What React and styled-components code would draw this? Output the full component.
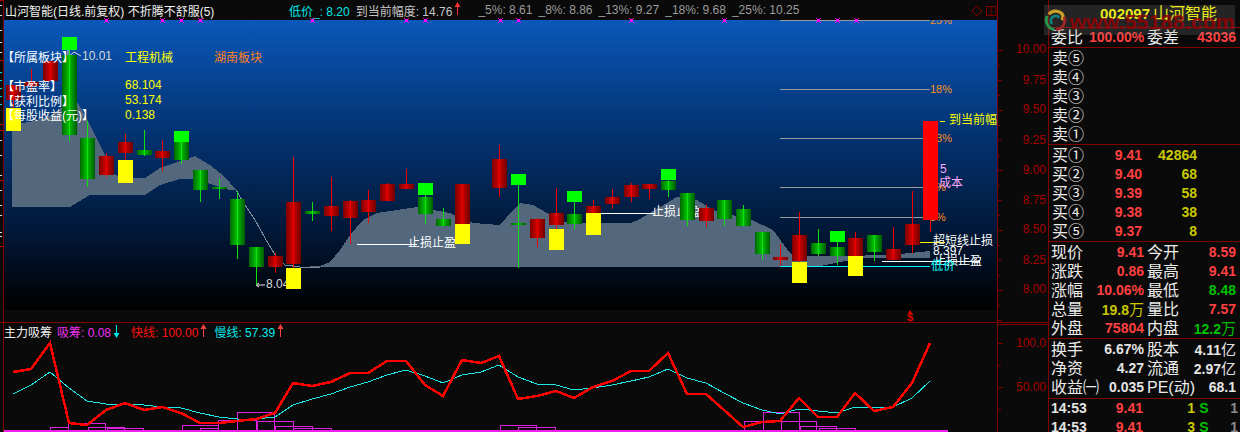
import React from "react";
import styled, { createGlobalStyle } from "styled-components";

const LINE = "#800000";
const FONT = `"Liberation Sans", "Noto Sans CJK SC", sans-serif`;

const GlobalStyle = createGlobalStyle`
  html, body {
    margin: 0;
    width: 1240px;
    height: 432px;
    overflow: hidden;
    background: #0a0a0a;
  }
`;

const Frame = styled.div`
  position: relative;
  display: flex;
  width: 1240px;
  height: 432px;
  overflow: hidden;
  background: #0a0a0a;
  font-family: ${FONT};
  font-size: 12px;
  color: #e8e8e8;
`;

const Charts = styled.div`
  display: flex;
  flex-direction: column;
  width: 1048px;
  flex: none;
`;

const MainPane = styled.div`
  display: flex;
  height: 322px;
  border-bottom: 1px solid ${LINE};
`;

const SubPane = styled.div`
  display: flex;
  height: 109px;
`;

const Rail = styled.div`
  width: 3px;
  flex: none;
  border-right: 1px solid ${LINE};
  overflow: hidden;
  svg {
    display: block;
  }
`;

const Column = styled.div`
  display: flex;
  flex-direction: column;
  width: 993px;
  flex: none;
`;

const AxisBox = styled.div`
  width: 50px;
  flex: none;
  border-left: 1px solid ${LINE};
  svg {
    display: block;
  }
`;

const SubAxisBox = styled(AxisBox)`
  margin-top: 1px;
  border-top: 1px solid ${LINE};
`;

const HeaderBar = styled.div`
  display: flex;
  align-items: center;
  height: 20px;
  padding-left: 1px;
  white-space: nowrap;
`;

const Title = styled.span`
  width: 284px;
  flex: none;
  color: #f0f0f0;
`;

const Reading = styled.span`
  flex: none;
  margin-right: ${(p) => p.$gap ?? 6}px;
  color: ${(p) => p.$color};
`;

const WindowIcons = styled.svg`
  margin-left: auto;
  flex: none;
`;

const Canvas = styled.div`
  position: relative;
  height: 290px;
  background: linear-gradient(
    180deg,
    #0a58ba 0%,
    #06428f 22%,
    #03306c 42%,
    #02214b 62%,
    #011229 80%,
    #000000 100%
  );
  svg {
    display: block;
  }
`;

const MarkerLayer = styled.svg`
  position: absolute;
  left: 0;
  top: -3px;
`;

const Footer = styled.div`
  position: relative;
  height: 12px;
  padding-left: 903px;
  color: #e00000;
  font-weight: bold;
  font-size: 11px;
  line-height: 15px;
  &::before {
    content: "";
    position: absolute;
    left: 904px;
    top: 0;
    border-left: 2px solid transparent;
    border-right: 2px solid transparent;
    border-bottom: 3px solid #e00000;
  }
`;

const Info = styled.div`
  position: absolute;
  left: -2px;
  top: 29px;
  display: grid;
  grid-template-columns: 123px 89px auto;
  grid-auto-rows: 14.6px;
  align-items: center;
  white-space: nowrap;
  color: #ffffff;
`;

const InfoValue = styled.span`
  color: ${(p) => p.$color || "#ffff00"};
`;

const Blank = styled.span`
  grid-column: 1 / -1;
`;

const Legend = styled.div`
  display: flex;
  align-items: center;
  height: 16px;
  white-space: nowrap;
`;

const LegendName = styled.span`
  color: #f0f0f0;
  margin-right: 5px;
`;

const LegendItem = styled.span`
  color: ${(p) => p.$color};
  margin-right: 2px;
`;

const LegendArrow = styled.span`
  display: inline-flex;
  margin-right: ${(p) => p.$gap}px;
`;

const SubCanvas = styled.div`
  height: 93px;
  overflow: hidden;
  svg {
    display: block;
  }
`;

const ChartText = styled.text`
  fill: ${(p) => p.$fill};
  font-size: ${(p) => p.$size || 12}px;
  font-family: ${FONT};
  dominant-baseline: middle;
`;

const AxisText = styled.text`
  fill: #a80000;
  font-size: 12px;
  font-family: ${FONT};
  text-anchor: end;
  dominant-baseline: middle;
`;

const Panel = styled.div`
  width: 191px;
  flex: none;
  border-left: 1px solid ${LINE};
  overflow: hidden;
  display: flex;
  flex-direction: column;
`;

const PanelTitle = styled.div`
  display: flex;
  align-items: center;
  flex: none;
  height: 27px;
  padding-left: 51px;
  border-bottom: 1px solid ${LINE};
  color: #ffff00;
  white-space: nowrap;
`;

const Code = styled.span`
  font-size: 15px;
  font-weight: bold;
  margin-right: 3px;
`;

const StockName = styled.span`
  font-size: 16px;
  line-height: 19px;
`;

const Section = styled.div`
  flex: none;
  padding-top: ${(p) => p.$top ?? 1}px;
  height: ${(p) => p.$height}px;
  box-sizing: border-box;
  border-bottom: ${(p) => (p.$open ? "none" : `1px solid ${LINE}`)};
`;

const QuoteRow = styled.div`
  display: grid;
  grid-template-columns: 38px 55px 42px 50px;
  grid-template-rows: 19px;
  align-items: center;
  padding-left: 2px;
  white-space: nowrap;
  line-height: 19px;
  & > :nth-child(3) {
    margin-left: 3px;
  }
`;

const BookRow = styled.div`
  display: grid;
  grid-template-columns: 38px 52px 55px;
  grid-template-rows: 19px;
  align-items: center;
  padding-left: 3px;
  white-space: nowrap;
  line-height: 19px;
`;

const TradeRow = styled.div`
  display: grid;
  grid-template-columns: 44px 48px 52px 18px 25px;
  grid-template-rows: 19px;
  align-items: center;
  padding-left: 2px;
  white-space: nowrap;
  line-height: 19px;
`;

const Label = styled.span`
  font-size: 16px;
  color: #ececec;
`;

const Value = styled.span`
  font-size: 14px;
  font-weight: bold;
  text-align: ${(p) => p.$align || "right"};
  color: ${(p) => p.$color || "#e4e4e4"};
`;

const Unit = styled.span`
  font-size: 15px;
  font-weight: normal;
`;

const Watermark = styled.div`
  position: absolute;
  left: 1044px;
  top: 5px;
  width: 191px;
  height: 30px;
  display: flex;
  align-items: center;
  background: rgba(140, 140, 140, 0.2);
  pointer-events: none;
`;

const WatermarkText = styled.span`
  margin-left: 3px;
  font-size: 21px;
  font-weight: bold;
  letter-spacing: 0.3px;
  color: rgba(150, 0, 0, 0.85);
  position: relative;
  top: 2px;
`;

const RED = "#ff4040";
const YEL = "#c8c800";
const GRN = "#00c000";

const cx = (i) => Math.round(12.5 + 18.73 * i);

// [index, colour, body top, body bottom, wick top, wick bottom]
const candles = [
  [0, "r", 85, 100, 85, 108],
  [1, "r", 82, 86, 69, 92],
  [2, "r", 61, 81, 61, 81],
  [3, "g", 55, 135, 50, 141],
  [4, "g", 138, 179, 121, 187],
  [5, "r", 156, 175, 153, 177],
  [6, "r", 142, 153, 134, 160],
  [7, "g", 150, 155, 130, 156],
  [8, "r", 151, 158, 140, 171],
  [9, "g", 142, 160, 142, 164],
  [10, "g", 170, 190, 170, 202],
  [11, "g", 187, 189, 179, 199],
  [12, "g", 199, 245, 191, 259],
  [13, "g", 247, 267, 247, 285],
  [14, "r", 256, 267, 253, 273],
  [15, "r", 202, 264, 157, 268],
  [16, "g", 211, 214, 202, 221],
  [17, "r", 206, 216, 177, 231],
  [18, "r", 201, 218, 200, 244],
  [19, "r", 200, 212, 190, 223],
  [20, "r", 184, 201, 183, 201],
  [21, "r", 184, 189, 169, 189],
  [22, "g", 197, 214, 195, 224],
  [23, "g", 219, 226, 208, 226],
  [24, "r", 184, 224, 184, 224],
  [26, "r", 159, 188, 145, 197],
  [27, "g", 223, 225, 185, 268],
  [28, "r", 219, 238, 218, 247],
  [29, "r", 213, 225, 188, 229],
  [30, "g", 214, 224, 202, 229],
  [31, "r", 206, 213, 200, 213],
  [32, "r", 197, 204, 189, 209],
  [33, "r", 185, 197, 183, 202],
  [34, "r", 184, 189, 184, 199],
  [35, "g", 181, 190, 180, 197],
  [36, "g", 193, 220, 193, 226],
  [37, "r", 208, 221, 205, 227],
  [38, "g", 200, 219, 200, 226],
  [39, "g", 209, 226, 205, 226],
  [40, "g", 232, 254, 232, 260],
  [41, "r", 257, 260, 244, 266],
  [42, "r", 235, 261, 212, 262],
  [43, "g", 243, 254, 229, 256],
  [44, "g", 247, 256, 242, 265],
  [45, "r", 238, 256, 232, 256],
  [46, "g", 235, 252, 235, 261],
  [47, "r", 249, 260, 227, 260],
  [48, "r", 224, 245, 191, 253],
];

const yellowBoxes = [
  [0, 108, 131],
  [6, 160, 183],
  [15, 268, 289],
  [24, 224, 244],
  [29, 229, 250],
  [31, 213, 235],
  [42, 262, 283],
  [45, 256, 276],
];

const greenBoxes = [
  [3, 37, 50],
  [9, 131, 142],
  [22, 183, 195],
  [27, 174, 185],
  [30, 191, 202],
  [35, 169, 180],
  [44, 231, 242],
];

const markers = [106, 162, 181, 200, 312, 406, 425, 500, 518, 631, 724, 818, 837, 856];

const fibLines = [
  [20, "25%"],
  [89, "18%"],
  [138, "13%"],
  [187, "8%"],
  [217, "5%"],
];

const areaOne =
  "12,207 12,124 30,122 50,116 68,103 76,100 86,117 100,145 115,175 125,178 145,178 160,168 180,161 195,156 210,165 225,177 236,190 230,190 210,184 195,179 180,179 160,185 145,195 90,195 70,207";
const areaTwo =
  "300,267 320,266 330,262 340,250 350,235 363,220 377,213 417,207 450,213 473,223 500,225 513,210 520,203 533,205 547,213 557,220 570,223 631,223 638,220 660,207 677,197 697,200 713,210 752,220 773,230 790,253 793,256 850,256 880,255 900,254 930,251 930,258 880,258 860,258 840,262 825,265 817,267";

const red = [
  372, 369, 343, 423, 425, 410, 403, 410, 407, 413, 423, 423, 421, 419, 413, 383, 386, 382, 373, 373, 361, 361, 385,
  396, 360, 363, 356, 399, 396, 391, 398, 387, 381, 371, 371, 353, 394, 394, 410, 427, 422, 421, 398, 417, 417, 393,
  411, 407, 383, 343,
];

const cyan = [
  394, 385, 372, 388, 401, 404, 404, 405, 407, 408, 413, 417, 419, 419, 417, 405, 399, 394, 387, 382, 375, 370, 376,
  383, 375, 372, 365, 377, 384, 385, 390, 388, 385, 381, 377, 369, 378, 383, 393, 403, 410, 414, 409, 411, 413, 407,
  408, 407, 398, 381,
];

// [left, right, top] of every step of the histogram
const steps = [
  [50, 68, 427],
  [68, 105, 423],
  [88, 124, 427],
  [107, 143, 428],
  [182, 218, 425],
  [200, 218, 428],
  [218, 256, 420],
  [237, 274, 412],
  [257, 293, 421],
  [275, 312, 426],
  [293, 331, 428],
  [500, 536, 425],
  [518, 555, 427],
  [744, 781, 421],
  [763, 799, 412],
  [781, 816, 421],
  [800, 836, 426],
  [819, 855, 428],
];

const toPoints = (ys) => ys.map((y, i) => `${cx(i)},${y}`).join(" ");

const Arrow = ({ up, color }) => (
  <svg width="7" height="14" viewBox="0 0 7 14">
    <line x1="3.5" y1="1" x2="3.5" y2="13" stroke={color} />
    {up ? <polygon points="3.5,0 6.5,5 0.5,5" fill={color} /> : <polygon points="3.5,14 6.5,9 0.5,9" fill={color} />}
  </svg>
);

const Candle = ({ data }) => {
  const [i, c, top, bot, wt, wb] = data;
  const x = cx(i);
  return (
    <g shapeRendering="crispEdges">
      <rect x={x - 7.5} y={top} width={15} height={bot - top} fill={c === "r" ? "url(#redBody)" : "url(#greenBody)"} />
      <rect x={x} y={wt} width={1} height={wb - wt} fill={c === "r" ? "#f00000" : "#10e010"} />
    </g>
  );
};

const PriceChart = () => (
  <svg width="993" height="290" viewBox="4 20 993 290">
    <defs>
      <linearGradient id="redBody">
        <stop offset="0" stopColor="#740000" />
        <stop offset="0.5" stopColor="#d40000" />
        <stop offset="1" stopColor="#740000" />
      </linearGradient>
      <linearGradient id="greenBody">
        <stop offset="0" stopColor="#006000" />
        <stop offset="0.5" stopColor="#00c400" />
        <stop offset="1" stopColor="#006000" />
      </linearGradient>
    </defs>
    <g shapeRendering="crispEdges">
      <polygon points={areaOne} fill="#53677d" />
      <polygon points={areaTwo} fill="#53677d" />
      <polyline
        points="236,190 245,205 255,220 265,238 275,255 285,265 300,267 320,267"
        fill="none"
        stroke="#7c8a9a"
      />
      {fibLines.map(([y]) => (
        <rect key={y} x={780} y={y} width={150} height={1} fill="#9a9a9a" />
      ))}
      <rect x={357} y={244} width={60} height={1} fill="#ffffff" />
      <rect x={601} y={213} width={54} height={1} fill="#ffffff" />
      <rect x={882} y={261} width={98} height={1} fill="#ffffff" />
      <rect x={780} y={266} width={150} height={1} fill="#00ffff" />
      <rect x={918} y={242} width={27} height={1} fill="#ffff00" />
      <rect x={932} y={121} width={4} height={1} fill="#ffff00" />
      <rect x={940} y={121} width={5} height={1} fill="#ffff00" />
    </g>
    {fibLines.map(([y, t]) => (
      <ChartText key={t} x={930} y={y + 1} $fill="#ff9020" $size={11}>
        {t}
      </ChartText>
    ))}
    <ChartText x={82} y={57} $fill="#d8d8d8">
      10.01
    </ChartText>
    <ChartText x={408} y={244} $fill="#ffffff">
      止损止盈
    </ChartText>
    <ChartText x={652} y={213} $fill="#ffffff">
      止损止盈
    </ChartText>
    <ChartText x={266} y={285} $fill="#d8d8d8">
      8.04
    </ChartText>
    <ChartText x={949} y={121} $fill="#ffff00">
      到当前幅度
    </ChartText>
    <ChartText x={940} y={170} $fill="#ffaaff">
      5
    </ChartText>
    <ChartText x={939} y={184} $fill="#ffaaff">
      成本
    </ChartText>
    <ChartText x={933} y={242} $fill="#ffffff">
      超短线止损
    </ChartText>
    <ChartText x={933} y={252} $fill="#ffffff">
      8.397
    </ChartText>
    <ChartText x={934} y={262} $fill="#ffffff">
      止损止盈
    </ChartText>
    <ChartText x={931} y={267} $fill="#00ffff">
      低价
    </ChartText>
    <path d="M256 285 H265 M256 285 L259 283 M256 285 L259 287" stroke="#e8e8e8" fill="none" />
    <path d="M81 56 L74 52 L68 57 M68 49 L68 57" stroke="#d8d8d8" fill="none" />
    {candles.map((c) => (
      <Candle key={c[0]} data={c} />
    ))}
    <g shapeRendering="crispEdges">
      <rect x={cx(49)} y={220} width={1} height={12} fill="#f00000" />
      <rect x={cx(49) - 7.5} y={121} width={15} height={99} fill="#ff0000" />
      {yellowBoxes.map(([i, t, b]) => (
        <rect key={i} x={cx(i) - 7.5} y={t} width={15} height={b - t} fill="#ffff00" />
      ))}
      {greenBoxes.map(([i, t, b]) => (
        <rect key={i} x={cx(i) - 7.5} y={t} width={15} height={b - t} fill="#00ff00" />
      ))}
    </g>
  </svg>
);

// small magenta crosses that sit across the top edge of the chart
const Markers = () => (
  <MarkerLayer width="993" height="7" viewBox="4 17 993 7" shapeRendering="crispEdges">
    {markers.map((x) => (
      <g key={x} stroke="#ff00ff" fill="none">
        <path d={`M${x - 2} 18 L${x + 3} 23 M${x + 3} 18 L${x - 2} 23`} />
        <rect x={x - 1} y={19} width={3} height={3} fill="#ff00ff" stroke="none" />
      </g>
    ))}
  </MarkerLayer>
);

const IndicatorChart = () => (
  <svg width="993" height="93" viewBox="4 339 993 93">
    <g shapeRendering="crispEdges">
      {steps.map(([l, r, t]) => (
        <polyline key={l} points={`${l},431 ${l},${t} ${r},${t} ${r},431`} fill="none" stroke="#e020e0" />
      ))}
      <rect x={4} y={430} width={944} height={2} fill="#f020f0" />
      <polyline points={toPoints(cyan)} fill="none" stroke="#20e8e8" />
      <polyline points={toPoints(red)} fill="none" stroke="#ff0000" strokeWidth="2.5" />
    </g>
  </svg>
);

const range = (from, to, step) => {
  const out = [];
  for (let v = from; v <= to; v += step) out.push(v);
  return out;
};

const priceLabels = [
  ["10.00", 50],
  ["9.75", 81],
  ["9.50", 110],
  ["9.25", 141],
  ["9.00", 171],
  ["8.75", 201],
  ["8.50", 230],
  ["8.25", 261],
  ["8.00", 290],
];

const PriceAxis = () => (
  <svg width="50" height="322" viewBox="998 0 50 322">
    {range(50, 320, 15).map((y) => {
      const long = (y - 50) % 60 === 0;
      const mid = (y - 50) % 30 === 0;
      return (
        <rect
          key={y}
          x={998}
          y={y}
          width={long ? 5 : mid ? 4 : 2}
          height={1}
          fill={LINE}
          shapeRendering="crispEdges"
        />
      );
    })}
    {priceLabels.map(([t, y]) => (
      <AxisText key={t} x={1046} y={y}>
        {t}
      </AxisText>
    ))}
  </svg>
);

const IndicatorAxis = () => (
  <svg width="50" height="108" viewBox="998 324 50 108">
    {[
      [342, 5],
      [364, 3],
      [386, 5],
      [408, 3],
    ].map(([y, w]) => (
      <rect key={y} x={998} y={y} width={w} height={1} fill={LINE} shapeRendering="crispEdges" />
    ))}
    <AxisText x={1046} y={343}>
      100.0
    </AxisText>
    <AxisText x={1046} y={387}>
      50.00
    </AxisText>
  </svg>
);

const RailMarks = ({ height, white, cyanMarks, redMarks }) => (
  <svg width="3" height={height} viewBox={`0 0 3 ${height}`} shapeRendering="crispEdges">
    {white.map((y) => (
      <rect key={y} x={0} y={y} width={2} height={1} fill="#e0e0e0" />
    ))}
    {cyanMarks.map((y) => (
      <rect key={y} x={0} y={y} width={2} height={1} fill="#00e0e0" />
    ))}
    {redMarks.map((y) => (
      <rect key={y} x={0} y={y} width={3} height={1} fill="#c00000" />
    ))}
  </svg>
);

const Logo = () => (
  <svg width="28" height="28" viewBox="0 0 28 28" fill="none">
    <path d="M6 7 A11 11 0 0 1 22 6 Q25 10 22 14" stroke="#c8a028" strokeWidth="4" />
    <path d="M25 10 A12 12 0 0 1 15 26" stroke="#a02428" strokeWidth="3.5" />
    <path d="M4 9 A12 12 0 0 0 13 26" stroke="#28984c" strokeWidth="3.5" />
    <path d="M10 19 A6 6 0 0 1 19 11" stroke="#108078" strokeWidth="3.5" />
  </svg>
);

const book = [
  ["买①", "9.41", "42864"],
  ["买②", "9.40", "68"],
  ["买③", "9.39", "58"],
  ["买④", "9.38", "38"],
  ["买⑤", "9.37", "8"],
];

const Quote = ({ a, b, c, d, bColor, dColor, bUnit, dUnit }) => (
  <QuoteRow>
    <Label>{a}</Label>
    <Value $color={bColor}>
      {b}
      {bUnit && <Unit>{bUnit}</Unit>}
    </Value>
    <Label>{c}</Label>
    <Value $color={dColor}>
      {d}
      {dUnit && <Unit>{dUnit}</Unit>}
    </Value>
  </QuoteRow>
);

const Trade = ({ vol }) => (
  <TradeRow>
    <Value $align="left">14:53</Value>
    <Value $color={RED}>9.41</Value>
    <Value $color={YEL}>{vol}</Value>
    <Value $color={GRN} $align="center">
      S
    </Value>
    <Value $color="#8a8a8a">1</Value>
  </TradeRow>
);

export default function App() {
  return (
    <>
      <GlobalStyle />
      <Frame>
        <Charts>
          <MainPane>
            <Rail>
              <RailMarks
                height={322}
                white={[5, 15, 30, 42, 52, 140, 155, 175, 190, 205, 215, 232, 236]}
                cyanMarks={[72, 80, 88, 96, 104]}
                redMarks={[0, 60, 124, 130, 180, 246]}
              />
            </Rail>
            <Column>
              <HeaderBar>
                <Title>山河智能(日线.前复权) 不折腾不舒服(5)</Title>
                <Reading $color="#00e8e8">低价_: 8.20</Reading>
                <Reading $color="#c4c4c4" $gap={2}>
                  到当前幅度: 14.76
                </Reading>
                <Reading $gap={17}>
                  <Arrow up color="#ff3030" />
                </Reading>
                <Reading $color="#9c9c9c">_5%: 8.61</Reading>
                <Reading $color="#9c9c9c">_8%: 8.86</Reading>
                <Reading $color="#9c9c9c">_13%: 9.27</Reading>
                <Reading $color="#9c9c9c">_18%: 9.68</Reading>
                <Reading $color="#9c9c9c">_25%: 10.25</Reading>
                <WindowIcons width="26" height="14" viewBox="0 0 26 14" fill="none" stroke={LINE}>
                  <path d="M6 3 L11 8 L6 13 L1 8 Z" />
                  <path d="M15.5 3.5 H25 V12.5 H15.5 Z M20 3.5 V12.5" />
                </WindowIcons>
              </HeaderBar>
              <Canvas>
                <PriceChart />
                <Markers />
                <Info>
                  <span>【所属板块】</span>
                  <InfoValue>工程机械</InfoValue>
                  <InfoValue $color="#ff8020">湖南板块</InfoValue>
                  <Blank />
                  <span>【市盈率】</span>
                  <InfoValue>68.104</InfoValue>
                  <span />
                  <span>【获利比例】</span>
                  <InfoValue>53.174</InfoValue>
                  <span />
                  <span>【每股收益(元)】</span>
                  <InfoValue>0.138</InfoValue>
                </Info>
              </Canvas>
              <Footer>$</Footer>
            </Column>
            <AxisBox>
              <PriceAxis />
            </AxisBox>
          </MainPane>
          <SubPane>
            <Rail />
            <Column>
              <Legend>
                <LegendName>主力吸筹</LegendName>
                <LegendItem $color="#f030f0">吸筹: 0.08</LegendItem>
                <LegendArrow $gap={11}>
                  <Arrow color="#00e8e8" />
                </LegendArrow>
                <LegendItem $color="#ff1010">快线: 100.00</LegendItem>
                <LegendArrow $gap={7}>
                  <Arrow up color="#ff4040" />
                </LegendArrow>
                <LegendItem $color="#00e8e8">慢线: 57.39</LegendItem>
                <LegendArrow $gap={0}>
                  <Arrow up color="#ff4040" />
                </LegendArrow>
              </Legend>
              <SubCanvas>
                <IndicatorChart />
              </SubCanvas>
            </Column>
            <SubAxisBox>
              <IndicatorAxis />
            </SubAxisBox>
          </SubPane>
        </Charts>
        <Panel>
          <PanelTitle>
            <Code>002097</Code>
            <StockName>山河智能</StockName>
          </PanelTitle>
          <Section $top={0} $height={20}>
            <Quote a="委比" b="100.00%" bColor={RED} c="委差" d="43036" dColor={RED} />
          </Section>
          <Section $height={97}>
            {["卖⑤", "卖④", "卖③", "卖②", "卖①"].map((t) => (
              <BookRow key={t}>
                <Label>{t}</Label>
              </BookRow>
            ))}
          </Section>
          <Section $height={97}>
            {book.map(([t, p, v]) => (
              <BookRow key={t}>
                <Label>{t}</Label>
                <Value $color={RED}>{p}</Value>
                <Value $color={YEL}>{v}</Value>
              </BookRow>
            ))}
          </Section>
          <Section $height={97}>
            <Quote a="现价" b="9.41" bColor={RED} c="今开" d="8.59" dColor={RED} />
            <Quote a="涨跌" b="0.86" bColor={RED} c="最高" d="9.41" dColor={RED} />
            <Quote a="涨幅" b="10.06%" bColor={RED} c="最低" d="8.48" dColor={GRN} />
            <Quote a="总量" b="19.8" bUnit="万" bColor={YEL} c="量比" d="7.57" dColor={RED} />
            <Quote a="外盘" b="75804" bColor={RED} c="内盘" d="12.2" dUnit="万" dColor={GRN} />
          </Section>
          <Section $height={60}>
            <Quote a="换手" b="6.67%" c="股本" d="4.11" dUnit="亿" />
            <Quote a="净资" b="4.27" c="流通" d="2.97" dUnit="亿" />
            <Quote a="收益㈠" b="0.035" c="PE(动)" d="68.1" />
          </Section>
          <Section $open $top={0} $height={34}>
            <Trade vol="1" />
            <Trade vol="3" />
          </Section>
        </Panel>
        <Watermark>
          <Logo />
          <WatermarkText>www.55188.com</WatermarkText>
        </Watermark>
      </Frame>
    </>
  );
}
